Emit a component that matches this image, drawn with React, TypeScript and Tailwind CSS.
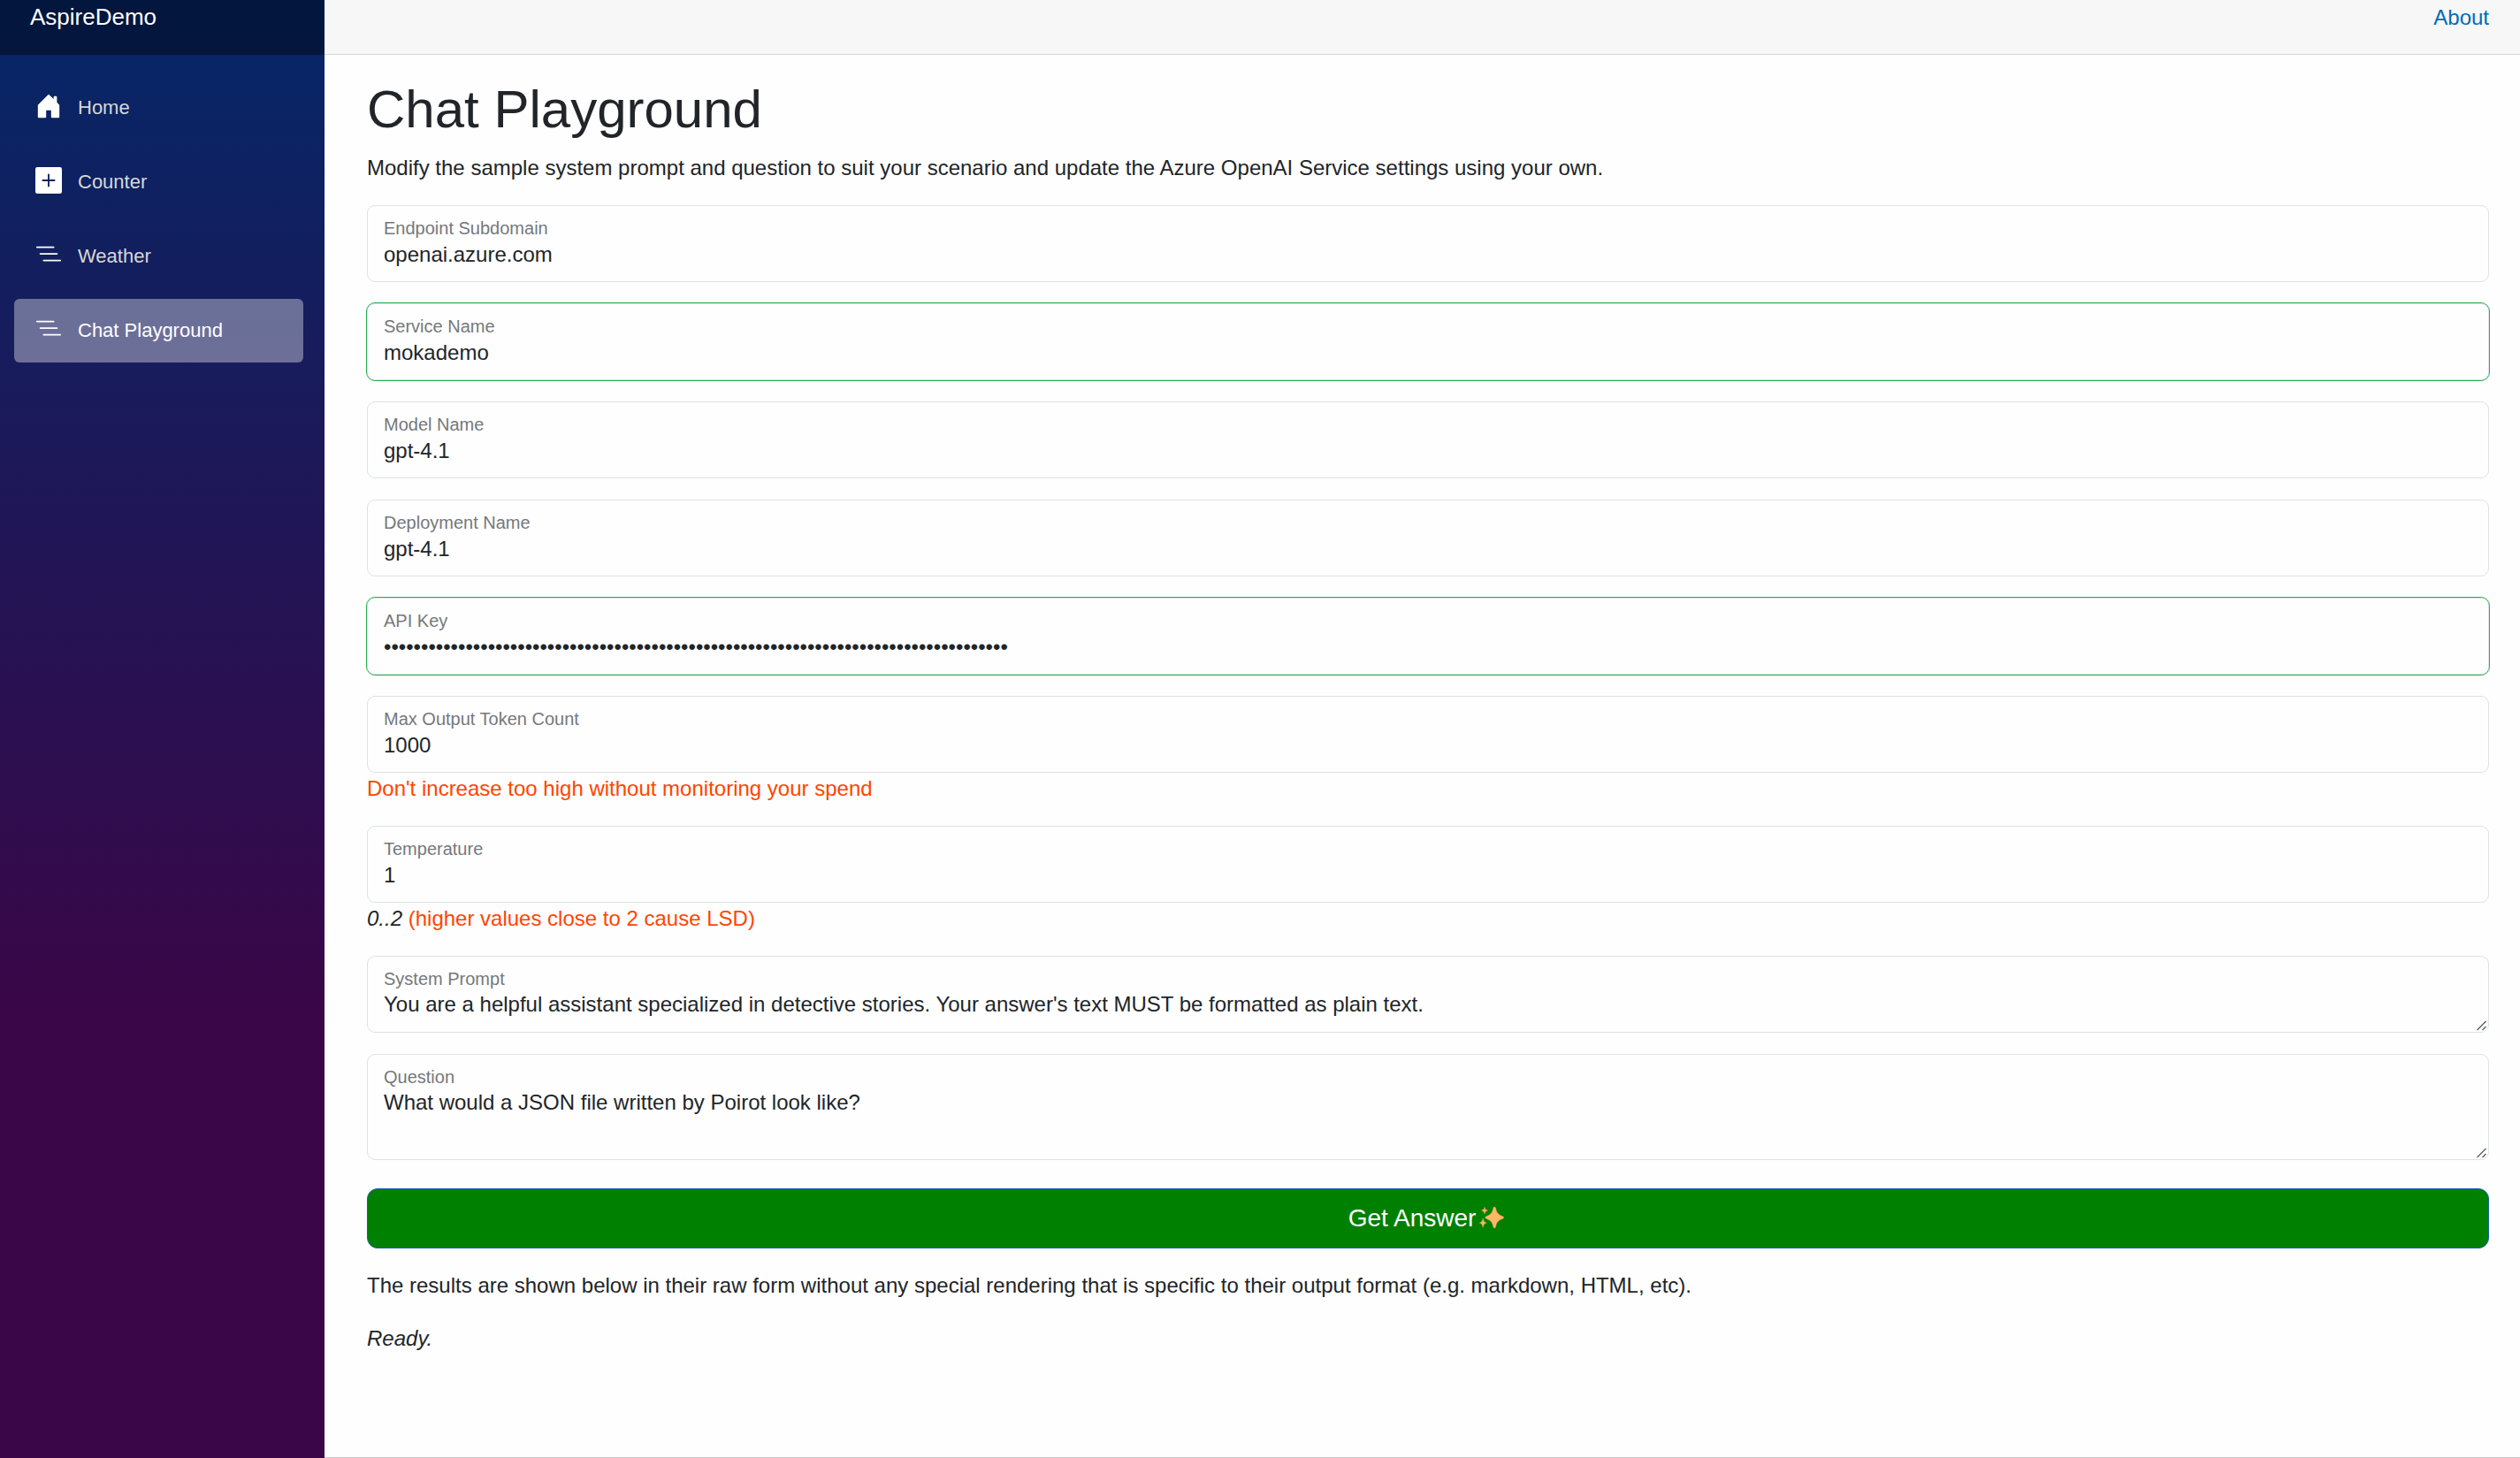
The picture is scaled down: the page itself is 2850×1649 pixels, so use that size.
import React, { useId } from "react";

const HOUSE =
  "M6.5 14.5v-3.505c0-.245.25-.495.5-.495h2c.25 0 .5.25.5.5v3.5a.5.5 0 0 0 .5.5h4a.5.5 0 0 0 .5-.5v-7a.5.5 0 0 0-.146-.354L13 5.793V2.5a.5.5 0 0 0-.5-.5h-1a.5.5 0 0 0-.5.5v1.293L8.354 1.146a.5.5 0 0 0-.708 0l-6 6A.5.5 0 0 0 1.5 7.5v7a.5.5 0 0 0 .5.5h4a.5.5 0 0 0 .5-.5Z";
const PLUS_SQUARE =
  "M1.2 0A1.2 1.2 0 0 0 0 1.2v13.6A1.2 1.2 0 0 0 1.2 16h13.6a1.2 1.2 0 0 0 1.2-1.2V1.2A1.2 1.2 0 0 0 14.8 0H1.2zm7.3 4.5v3h3a.5.5 0 0 1 0 1h-3v3a.5.5 0 0 1-1 0v-3h-3a.5.5 0 0 1 0-1h3v-3a.5.5 0 0 1 1 0z";
const LIST_NESTED =
  "M4.5 11.5A.5.5 0 0 1 5 11h10a.5.5 0 0 1 0 1H5a.5.5 0 0 1-.5-.5zm-2-4A.5.5 0 0 1 3 7h10a.5.5 0 0 1 0 1H3a.5.5 0 0 1-.5-.5zm-2-4A.5.5 0 0 1 1 3h10a.5.5 0 0 1 0 1H1a.5.5 0 0 1-.5-.5z";

const navItems = [
  { label: "Home", icon: HOUSE, active: false },
  { label: "Counter", icon: PLUS_SQUARE, active: false },
  { label: "Weather", icon: LIST_NESTED, active: false },
  { label: "Chat Playground", icon: LIST_NESTED, active: true },
];

const controlBase =
  "block w-full rounded-[9px] border border-[#dee2e6] bg-[#fefefe] px-[18px] pt-[39px] pb-[15px] leading-[30px] text-[#212529]";

type FieldProps = {
  label: string;
  value: string;
  type?: string;
  valid?: boolean;
  note?: React.ReactNode;
};

function FloatingLabel({ id, children }: { id: string; children: React.ReactNode }) {
  return (
    <label
      htmlFor={id}
      className="pointer-events-none absolute top-3 left-[19px] text-[20px] leading-7 text-[#75787b]"
    >
      {children}
    </label>
  );
}

function Field({ label, value, type = "text", valid = false, note }: FieldProps) {
  const id = useId();
  return (
    <div className="mb-6">
      <div className="relative">
        <input
          id={id}
          type={type}
          defaultValue={value}
          className={`${controlBase} h-[87px] ${
            valid ? "outline outline-1 outline-[#26b050]" : "outline-none"
          }`}
        />
        <FloatingLabel id={id}>{label}</FloatingLabel>
      </div>
      {note && <div>{note}</div>}
    </div>
  );
}

function TextArea({ label, value, tall = false }: { label: string; value: string; tall?: boolean }) {
  const id = useId();
  return (
    <div className="relative">
      <textarea
        id={id}
        defaultValue={value}
        className={`${controlBase} resize-y overflow-hidden outline-none [&::-webkit-resizer]:hidden ${
          tall ? "h-[120px]" : "h-[87px]"
        }`}
      />
      <FloatingLabel id={id}>{label}</FloatingLabel>
      <svg
        viewBox="0 0 12 12"
        className="pointer-events-none absolute right-[2px] bottom-[2px] size-3"
        stroke="#5f6164"
        strokeWidth="1.4"
        aria-hidden="true"
      >
        <path d="M.5 11 10.500 1M6.500 11 10.500 7" />
      </svg>
    </div>
  );
}

function Sparkles() {
  return (
    <svg
      viewBox="0 0 28 28"
      className="size-7"
      fill="#fbb865"
      stroke="#e89a4a"
      strokeWidth=".5"
      strokeLinejoin="round"
      aria-hidden="true"
    >
      <path d="M16 1.800Q17.200 .4 18.400 1.800C19.800 8.200 21 9.400 27 12Q28.600 13 27 14C21 16.600 19.800 17.800 18.400 24.200Q17.200 25.600 16 24.200C14.600 17.800 13.400 16.600 7.400 14Q5.800 13 7.400 12C13.400 9.400 14.600 8.200 16 1.800Z" />
      <path d="M6 1.200C6.700 3.900 7.200 4.400 9.500 5.100C7.200 5.800 6.700 6.300 6 9C5.300 6.300 4.800 5.800 2.500 5.100C4.800 4.400 5.300 3.900 6 1.200Z" />
      <path d="M4.200 14C5.100 17.600 5.700 18.200 8.400 19.100C5.700 20 5.100 20.600 4.200 24.200C3.300 20.600 2.700 20 .2 19.100C2.700 18.200 3.300 17.600 4.200 14Z" />
    </svg>
  );
}

export default function App() {
  return (
    <div className="flex min-h-screen bg-[#fefefe] font-['Liberation_Sans',Arial,sans-serif] text-[24px] leading-9 text-[#212529]">
      <aside className="w-[367px] shrink-0 bg-[linear-gradient(180deg,rgb(5,39,103)_0%,#3a0647_70%)]">
        <div className="bg-black/40 pb-6 pl-[34px]">
          <a href="#" className="block text-[26px] leading-[38px] text-white">
            AspireDemo
          </a>
        </div>
        <nav className="flex flex-col gap-3 pt-6 pr-6 pl-4">
          {navItems.map((item) => (
            <a
              key={item.label}
              href="#"
              aria-current={item.active ? "page" : undefined}
              className={`flex h-[72px] items-center gap-[18px] rounded-md px-6 text-[22px] ${
                item.active ? "bg-white/[.37] text-white" : "text-[#d7d7d7]"
              }`}
            >
              <svg viewBox="0 0 16 16" className="mb-1 size-[30px] fill-white" aria-hidden="true">
                <path d={item.icon} />
              </svg>
              {item.label}
            </a>
          ))}
        </nav>
      </aside>

      <main className="min-w-0 flex-1 border-b border-[#c8c8c8]">
        <div className="flex justify-end border-b border-[#d6d5d5] bg-[#f7f7f7] pr-[35px] pb-[21px]">
          <a href="#" className="leading-10 text-[#006bb7]">
            About
          </a>
        </div>

        <article className="pt-[26px] pr-[35px] pl-12">
          <h1 className="mb-3 text-[60px] leading-[72px]">Chat Playground</h1>
          <p className="mb-6">
            Modify the sample system prompt and question to suit your scenario and update the Azure OpenAI Service
            settings using your own.
          </p>

          <form onSubmit={(e) => e.preventDefault()}>
            <Field label="Endpoint Subdomain" value="openai.azure.com" />
            <Field label="Service Name" value="mokademo" valid />
            <Field label="Model Name" value="gpt-4.1" />
            <Field label="Deployment Name" value="gpt-4.1" />
            <Field label="API Key" type="password" value={"k".repeat(84)} valid />
            <Field
              label="Max Output Token Count"
              type="number"
              value="1000"
              note={<span className="text-[#ff4500]">Don't increase too high without monitoring your spend</span>}
            />
            <Field
              label="Temperature"
              type="number"
              value="1"
              note={
                <>
                  <em>0..2</em> <span className="text-[#ff4500]">(higher values close to 2 cause LSD)</span>
                </>
              }
            />
            <div className="mb-8 flex flex-col gap-6">
              <TextArea
                label="System Prompt"
                value="You are a helpful assistant specialized in detective stories. Your answer's text MUST be formatted as plain text."
              />
              <TextArea label="Question" value="What would a JSON file written by Poirot look like?" tall />
            </div>
            <button
              type="submit"
              className="mb-6 flex h-[68px] w-full items-center justify-center gap-1 rounded-xl border border-[#1861ac] bg-[#008000] pr-1 text-[28px] text-white"
            >
              Get Answer
              <Sparkles />
            </button>
          </form>

          <p className="mb-6">
            The results are shown below in their raw form without any special rendering that is specific to their output
            format (e.g. markdown, HTML, etc).
          </p>
          <p>
            <em>Ready.</em>
          </p>
        </article>
      </main>
    </div>
  );
}
